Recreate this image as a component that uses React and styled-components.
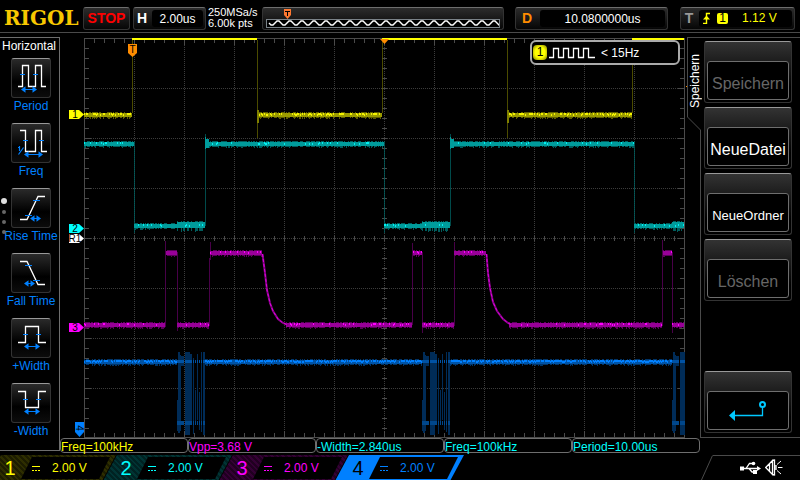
import React from 'react';
import styled, { createGlobalStyle } from 'styled-components';

const Colors = {
  ch1: '#ffff00',
  ch2: '#00ffff',
  ch3: '#ff00ff',
  ch4: '#0080ff',
  orange: '#ff8c00',
  line: '#4a4a4a',
  frame: '#6e6e6e',
  menu: '#00c8ff',
};

const measures = [
  { text: 'Freq=100kHz', color: Colors.ch1 },
  { text: 'Vpp=3.68 V', color: Colors.ch3 },
  { text: '-Width=2.840us', color: Colors.ch2 },
  { text: 'Freq=100kHz', color: Colors.ch2 },
  { text: 'Period=10.00us', color: Colors.ch2 },
];

const channels = [
  { id: 1, scale: '2.00 V', color: Colors.ch1, tint: '#2e2e00', shade: '#1c1c00' },
  { id: 2, scale: '2.00 V', color: Colors.ch2, tint: '#003434', shade: '#002222' },
  { id: 3, scale: '2.00 V', color: Colors.ch3, tint: '#340034', shade: '#200020' },
  { id: 4, scale: '2.00 V', color: Colors.ch4, active: true },
];

const tools = [
  {
    label: 'Period',
    wave: 'M7 28.5H11.5V7.5H17.5V28.5H24.5V7.5H30.5V28.5H35',
    ticks: 'M9 16.5H14M22 16.5H27',
    arrow: [11, 25, 31.5],
  },
  {
    label: 'Freq',
    wave: 'M9 7.5H14.5V28.5H24.5V7.5H30.5V28.5H36',
    ticks: 'M12 17.5H17M28 17.5H33M7.5 31.5L12.5 24.5M8.5 23V28M7 24.5H8',
    arrow: [14, 31, 31.5],
  },
  {
    label: 'Rise Time',
    wave: 'M9 31.5H16L27 8.5H34',
    ticks: 'M14 27.5H21M22 12.5H29',
    arrow: [20, 29, 30.5],
  },
  {
    label: 'Fall Time',
    wave: 'M9 8.5H16L27 31.5H34',
    ticks: 'M14 12.5H21M22 27.5H29',
    arrow: [14, 23, 30.5],
  },
  {
    label: '+Width',
    wave: 'M7 24.5H14.5V8.5H27.5V24.5H35',
    ticks: 'M12 16.5H17M25 16.5H30',
    arrow: [14, 28, 28.5],
  },
  {
    label: '-Width',
    wave: 'M7 8.5H14.5V24.5H27.5V8.5H35',
    ticks: 'M12 16.5H17M25 16.5H30',
    arrow: [14, 28, 28.5],
  },
];

// Small seeded generator, so the noise is the same on every render
const random = seed => {
  let s = seed;
  return () => {
    s = (s * 16807) % 2147483647;
    return s / 2147483647;
  };
};

const column = (x, y, h) => `M${x} ${y}h1v${h}h-1z`;

// Builds the bright, middle and faint layers of a noisy level.
// A segment is [from, to, top, extra noise]
const noise = (segments, seed, bright) => {
  const next = random(seed);
  const layers = { hot: '', mid: '', dim: '' };
  segments.forEach(([from, to, top, extra = 0]) => {
    for (let x = from; x < to; x++) {
      layers.mid += column(x, top + 1 - extra, 4 + extra);
      if (next() < bright) layers.hot += column(x, top + 1 + (next() < 0.3 ? 1 : 0), 2);
      if (next() < 0.6) layers.dim += column(x, top - extra, 6 + extra * 2);
      if (next() < 0.2) layers.dim += column(x, top + 5, 2 + extra);
    }
  });
  return layers;
};

const traces = [
  {
    name: 'ch1',
    hot: '#f4f400',
    mid: '#9c9c00',
    dim: '#5e5e00',
    segments: [[84, 132, 112], [258, 382, 112], [508, 632, 112]],
    bright: 0.5,
    edges: [
      [132, 40, 73], [257, 40, 98], [382, 40, 73], [507, 40, 98], [632, 40, 73],
    ],
  },
  {
    name: 'ch2',
    hot: '#00f0f0',
    mid: '#009c9c',
    dim: '#005c5c',
    segments: [
      [84, 134, 141], [134, 177, 223], [177, 205, 223, 2], [205, 384, 141],
      [384, 422, 223], [422, 450, 223, 2], [450, 634, 141], [634, 672, 223],
      [672, 684, 223, 2],
    ],
    bright: 0.16,
    edges: [
      [134, 141, 92], [205, 134, 92], [384, 141, 92], [450, 134, 92], [634, 141, 92],
    ],
  },
  {
    name: 'ch3',
    hot: '#ff00ff',
    mid: '#980098',
    dim: '#5a005a',
    segments: [
      [84, 165, 322], [166, 177, 250], [177, 209, 322], [210, 262, 250],
      [286, 412, 322], [413, 422, 250], [422, 454, 322], [454, 486, 250],
      [509, 662, 322], [663, 672, 250], [672, 684, 322],
    ],
    bright: 0.18,
    edges: [
      [165, 241, 86], [177, 252, 79], [209, 258, 68], [210, 242, 18], [412, 243, 82],
      [422, 252, 81], [454, 242, 84], [662, 240, 86], [672, 252, 81],
    ],
  },
  {
    name: 'ch4',
    hot: '#0080ff',
    mid: '#0052a4',
    dim: '#003468',
    segments: [[84, 177, 359], [205, 422, 359], [450, 672, 359]],
    bright: 0.8,
    edges: [],
  },
];

const decays = [
  'M262.5 254L265 273L267 290L270 303L273 311L278 319L283 323L288 325',
  'M486.5 254L488 273L490 288L493 302L497 311L503 319L508 323L512 325',
];

// [offset, top, width, height] of the serial data bursts
const burst = [
  [1, 352, 2, 81], [3, 355, 1, 76], [0, 400, 1, 31], [4, 356, 3, 10],
  [8, 352, 2, 83], [10, 352, 3, 83], [13, 354, 2, 68], [16, 358, 1, 76],
  [18, 390, 1, 32], [20, 354, 1, 66], [22, 392, 1, 38], [24, 352, 1, 80],
  [26, 352, 2, 83],
];

const range = (from, to, step) => {
  const list = [];
  for (let v = from; v <= to; v += step) list.push(v);
  return list;
};

const ToolIcon = ({ wave, ticks, arrow: [from, to, y] }) => (
  <svg width="38" height="38" viewBox="1 1 38 38" fill="none" aria-hidden="true">
    <path d={wave} stroke="#fff" strokeWidth="1.3" />
    <path d={`${ticks}M${from + 2} ${y}H${to - 2}`} stroke={Colors.ch4} strokeWidth="1.2" />
    <path
      d={`M${from - 1} ${y}l4.5 -3.3v6.6zM${to + 1} ${y}l-4.5 -3.3v6.6z`}
      fill={Colors.ch4}
    />
  </svg>
);

const Graticule = () => (
  <g shapeRendering="crispEdges" stroke="#3c3c3c" fill="none">
    {range(134, 634, 50).map(x => (
      <path key={x} d={`M${x}.5 39V437`} strokeDasharray="1 1" />
    ))}
    {range(88, 388, 50).map(y => (
      <path key={y} d={`M85 ${y}.5H684`} strokeDasharray="1 1" />
    ))}
    <path d="M84.5 38.5H684.5V437.5H84.5Z" stroke={Colors.line} />
    <path
      stroke={Colors.line}
      d={range(94, 674, 10)
        .map(x => {
          const l = (x - 84) % 50 ? 4 : 6;
          return `M${x}.5 39v${l}M${x}.5 437v-${l}M${x}.5 236v5`;
        })
        .join('')}
    />
    <path
      stroke={Colors.line}
      d={range(48, 428, 10)
        .map(y => {
          const l = (y - 38) % 50 ? 4 : 6;
          return `M85 ${y}.5h${l}M684 ${y}.5h-${l}M382 ${y}.5h5`;
        })
        .join('')}
    />
  </g>
);

const Trace = ({ trace, seed }) => {
  const layers = noise(trace.segments, seed, trace.bright);
  return (
    <g shapeRendering="crispEdges">
      <path d={layers.dim} fill={trace.dim} />
      <path
        d={trace.edges.map(([x, y, h]) => column(x, y, h)).join('')}
        fill={trace.dim}
        opacity="0.8"
      />
      <path d={layers.mid} fill={trace.mid} />
      <path d={layers.hot} fill={trace.hot} />
    </g>
  );
};

const Bursts = () => (
  <g shapeRendering="crispEdges">
    {[177, 422, 672].map(x =>
      burst
        .filter(([dx, , w]) => x + dx + w <= 685)
        .map(([dx, y, w, h]) => (
          <g key={x + dx}>
            <rect x={x + dx} y={y} width={w} height={h} fill="#002c58" />
            <rect x={x + dx} y={360} width={w} height={3} fill="#0052a4" />
            <rect x={x + dx} y={421} width={w} height={4} fill="#00478c" />
          </g>
        ))
    )}
  </g>
);

const Tag = ({ y, color, children }) => (
  <g>
    <path d={`M69 ${y}h10l5 4.5l-5 4.5h-10z`} fill={color} />
    <TagText x="75" y={y + 8}>
      {children}
    </TagText>
  </g>
);

const Plot = () => (
  <PlotSvg viewBox="60 37 627 401" role="img" aria-label="Waveforms">
    <Graticule />
    {traces.map((trace, i) => (
      <Trace key={trace.name} trace={trace} seed={977 + i * 131} />
    ))}
    <Bursts />
    {decays.map(d => (
      <g key={d} fill="none">
        <path d={d} stroke="#8a008a" strokeWidth="2" />
        <path d={d} stroke="#e000e0" strokeDasharray="3 2" />
      </g>
    ))}
    <path
      d="M132 38h125v2h-125zM382 38h125v2h-125zM632 38h52v2h-52z"
      fill={Colors.ch1}
    />
    <path
      d="M257 110h2v13h-2zM507 110h2v13h-2z"
      fill="#808000"
      shapeRendering="crispEdges"
    />
    <path
      d="M205 137h1v12h-1zM206 139h3v9h-3zM450 137h1v12h-1zM451 139h3v9h-3z"
      fill="#009c9c"
      shapeRendering="crispEdges"
    />
    <path d="M380 39h9l-4.500 5z" fill={Colors.orange} />
    <path d="M128 44h9v9l-4.500 4l-4.500 -4z" fill={Colors.orange} />
    <TagText x="132.5" y="53">
      T
    </TagText>
    <Tag y={110} color={Colors.ch1}>1</Tag>
    <Tag y={224} color={Colors.ch2}>2</Tag>
    <Tag y={234} color="#fff">R1</Tag>
    <Tag y={323} color={Colors.ch3}>3</Tag>
    <path d="M75 422h9v10l-4.500 5l-4.500 -5z" fill={Colors.ch4} />
    <TagText transform="translate(76 428) rotate(90)">4</TagText>
    <rect x="686" y="86" width="1" height="1" fill={Colors.orange} />
  </PlotSvg>
);

const Memory = () => {
  let d = 'M2 11';
  for (let x = 2; x < 233; x += 12) {
    d += 'l2 2h2l4 -4h2l2 2';
  }
  return (
    <svg width="100%" height="21" viewBox="0 0 240 21" aria-hidden="true">
      <rect x="3.500" y="11.500" width="233" height="8" fill="#000" stroke="#7a8288" />
      <svg x="4" y="4" width="232" height="16">
        <path d={d} fill="none" stroke="#fff" strokeWidth="1.400" />
      </svg>
      <path d="M21 1h7v6l-3.500 4l-3.500 -4z" fill="#ff7830" />
      <path d="M22 3.500h5M24.500 3v5" stroke="#000" />
    </svg>
  );
};

const App = () => (
  <Screen>
    <GlobalStyle />
    <TopBar>
      <Logo>RIGOL</Logo>
      <RunState>STOP</RunState>
      <Readout width={73}>
        <Symbol>H</Symbol>
        <Value>2.00us</Value>
      </Readout>
      <Sampling>
        250MSa/s
        <br />
        6.00k pts
      </Sampling>
      <MemoryBar>
        <Memory />
      </MemoryBar>
      <Readout width={153}>
        <Symbol color={Colors.orange} wide>D</Symbol>
        <Value>10.0800000us</Value>
      </Readout>
      <Readout width={115}>
        <Symbol color="#999">T</Symbol>
        <TriggerValue>
          <svg width="9" height="12" viewBox="0 0 9 12" fill="none" aria-hidden="true">
            <path d="M1 11.500H4.500V1.500H8" stroke={Colors.ch1} strokeWidth="1.400" />
            <path d="M1 7.500h7l-3.500 -4z" fill={Colors.ch1} />
          </svg>
          <Source>1</Source>
          <span>1.12 V</span>
        </TriggerValue>
      </Readout>
    </TopBar>

    <Main>
      <Sidebar>
        <SidebarTitle>Horizontal</SidebarTitle>
        {tools.map(tool => (
          <Tool key={tool.label} type="button">
            <Tile>
              <ToolIcon {...tool} />
            </Tile>
            {tool.label}
          </Tool>
        ))}
        <Pager>
          <Dot active />
          <Dot />
          <Dot />
          <Dot />
        </Pager>
      </Sidebar>

      <PlotArea>
        <Plot />
        <Counter>
          <CounterSource>1</CounterSource>
          <svg width="47" height="12" viewBox="0 0 47 12" aria-hidden="true">
            <path
              d="M0 10.500H4.500V1.500H9.500V10.500H14.500V1.500H19.500V10.500H24.500V1.500H29.500V10.500H34.500V1.500H39.500V10.500H46"
              fill="none"
              stroke="#fff"
              strokeWidth="1.300"
            />
          </svg>
          <span>&lt; 15Hz</span>
        </Counter>
      </PlotArea>

      <Menu>
        <Tab>
          <TabTitle>Speichern</TabTitle>
          <svg width="14" height="14" viewBox="0 0 14 14" aria-hidden="true">
            <path d="M0.500 0L13.500 13V14" fill="none" stroke={Colors.line} />
          </svg>
          <TabEdge />
        </Tab>
        <MenuItems>
          <MenuButton type="button" disabled>
            <MenuText>Speichern</MenuText>
          </MenuButton>
          <MenuButton type="button">
            <MenuText>NeueDatei</MenuText>
          </MenuButton>
          <MenuButton type="button">
            <MenuText small>NeueOrdner</MenuText>
          </MenuButton>
          <MenuButton type="button" disabled>
            <MenuText>Löschen</MenuText>
          </MenuButton>
          <BackButton type="button" aria-label="Back">
            <MenuText icon>
              <svg width="40" height="22" viewBox="0 0 40 22" fill="none" aria-hidden="true">
                <circle cx="34.500" cy="4.500" r="2.500" stroke={Colors.menu} strokeWidth="2" />
                <path d="M34.500 7V15.500H5" stroke={Colors.menu} strokeWidth="1.300" />
                <path d="M1 15.500l6 -5.500v11z" fill={Colors.menu} />
              </svg>
            </MenuText>
          </BackButton>
        </MenuItems>
      </Menu>

      <Measures>
        {measures.map(({ text, color }, i) => (
          <Measure key={i} color={color}>
            {text}
          </Measure>
        ))}
      </Measures>
    </Main>

    <BottomBar>
      {channels.map(channel => (
        <Channel key={channel.id} type="button" {...channel}>
          <ChannelNumber>{channel.id}</ChannelNumber>
          <ChannelInfo color={channel.color}>
            <svg width="8" height="5" viewBox="0 0 8 5" stroke="currentColor" aria-hidden="true">
              <path d="M0 0.500H8" />
              <path d="M0 4.500H8" strokeDasharray="2 1" />
            </svg>
            {channel.scale}
          </ChannelInfo>
        </Channel>
      ))}
      <Status>
        <svg width="12" height="26" viewBox="0 0 12 26" aria-hidden="true">
          <path d="M0 26L11.500 0.500" stroke={Colors.line} />
        </svg>
        <StatusIcons>
          <svg width="21" height="13" viewBox="0 0 21 13" fill="none" aria-label="USB">
            <path
              d="M3 7.500H18M6 7.500L9.500 2.500H13M9 7.500L12 11H15"
              stroke="#fff"
              strokeWidth="1.300"
            />
            <path d="M0 5.500h4v4h-4zM17 5l4 2.500l-4 2.500zM13 9h4v4h-4z" fill="#fff" />
            <circle cx="13.500" cy="2.500" r="1.800" fill="#fff" />
          </svg>
          <svg width="18" height="17" viewBox="0 0 18 17" fill="none" aria-label="Sound">
            <path
              d="M0.700 8.500L7.500 1.500V15.500ZM4.500 5V12M7.500 1.500L9.500 1V16L7.500 15.500M11 6V11"
              stroke="#fff"
              strokeWidth="1.300"
            />
            <path d="M12 5.500L16 2M13 8.500H17.500M12 11.500L16 15" stroke="#fff" />
          </svg>
        </StatusIcons>
      </Status>
    </BottomBar>
  </Screen>
);

const GlobalStyle = createGlobalStyle`
  * {
    box-sizing: border-box;
  }

  body {
    margin: 0;
    background: #000;
    color: #fff;
    font-family: 'Liberation Sans', Arial, sans-serif;
    font-size: 12px;
  }

  button {
    margin: 0;
    padding: 0;
    border: 0;
    background: none;
    color: inherit;
    font: inherit;
  }

  svg {
    display: block;
    flex: none;
  }
`;

const Screen = styled.div`
  display: flex;
  flex-direction: column;
  min-height: 100vh;
`;

const TopBar = styled.header`
  display: flex;
  align-items: center;
  height: 33px;
  padding: 4px 5px 0 0;
  border-bottom: 1px solid ${Colors.line};
`;

const Logo = styled.div`
  width: 83px;
  padding-left: 4px;
  color: #f8c800;
  font-family: 'DejaVu Serif', serif;
  font-size: 20px;
  font-weight: bold;
  line-height: 24px;
`;

const Box = styled.div`
  height: 23px;
  border: 1px solid #333;
  border-top-color: ${Colors.frame};
  border-radius: 3px;
  background: linear-gradient(#2c2c2c, #060606);
`;

const RunState = styled(Box)`
  width: 47px;
  margin-right: 3px;
  color: #f00;
  font-size: 14px;
  font-weight: bold;
  line-height: 20px;
  text-align: center;
`;

const Readout = styled(Box).withConfig({
  shouldForwardProp: prop => prop !== 'width',
})`
  display: flex;
  width: ${({ width }) => width}px;
`;

const Symbol = styled.span.withConfig({
  shouldForwardProp: prop => prop !== 'wide',
})`
  width: ${({ wide }) => (wide ? 22 : 16)}px;
  color: ${({ color }) => color || '#fff'};
  font-size: 14px;
  font-weight: bold;
  line-height: 21px;
  text-align: center;
`;

const Value = styled.span`
  flex: 1;
  margin: 2px;
  border-radius: 3px;
  background: #000;
  line-height: 19px;
  text-align: center;
`;

const TriggerValue = styled(Value)`
  display: flex;
  align-items: center;
  gap: 6px;
  padding-left: 3px;
  color: ${Colors.ch1};

  span:last-child {
    margin-left: 8px;
  }
`;

const Source = styled.span`
  width: 11px;
  border-radius: 2px;
  background: ${Colors.ch1};
  color: #000;
  line-height: 11px;
  text-align: center;
`;

const Sampling = styled.div`
  width: 56px;
  padding-left: 2px;
  font-size: 11px;
  line-height: 11px;
`;

const MemoryBar = styled(Box)`
  flex: 1;
  min-width: 0;
  margin-right: 11px;

  & + ${Readout} {
    margin-right: 12px;
  }
`;

const Main = styled.main`
  display: grid;
  flex: 1;
  grid-template-columns: 60px 1fr 113px;
  grid-template-rows: 1fr 16px;
  padding-top: 4px;
`;

const Sidebar = styled.nav`
  position: relative;
  grid-row: 1 / 3;
  margin-bottom: 3px;
  border: 1px solid ${Colors.frame};
  border-left: 0;
`;

const SidebarTitle = styled.div`
  padding-left: 2px;
  line-height: 16px;
  padding-bottom: 4px;
`;

const Tool = styled.button`
  display: flex;
  flex-direction: column;
  align-items: center;
  width: 100%;
  margin-bottom: 9px;
  padding-left: 3px;
  color: ${Colors.ch4};
  line-height: 16px;
  white-space: nowrap;

  &:last-of-type {
    margin-bottom: 0;
  }
`;

const Tile = styled.span`
  border: 1px solid #333;
  border-top-color: #999;
  border-radius: 3px;
  background: linear-gradient(#2a2a2a, #000 60%, #0c0c0c);
`;

const Pager = styled.div`
  position: absolute;
  top: 160px;
  left: 0;
  display: flex;
  flex-direction: column;
  align-items: center;
  width: 8px;
  gap: 6px;
`;

const Dot = styled.span.withConfig({
  shouldForwardProp: prop => prop !== 'active',
})`
  width: ${({ active }) => (active ? 6 : 4)}px;
  height: ${({ active }) => (active ? 6 : 4)}px;
  border-radius: 50%;
  background: ${({ active }) => (active ? '#ddd' : '#666')};
`;

const PlotArea = styled.section`
  position: relative;
`;

const PlotSvg = styled.svg`
  width: 100%;
`;

const TagText = styled.text`
  fill: #000;
  font-size: 10px;
  text-anchor: middle;
`;

const Counter = styled.div`
  position: absolute;
  top: 3px;
  right: 7px;
  display: flex;
  align-items: center;
  width: 150px;
  height: 25px;
  padding: 0 1px;
  border: 2px solid #aaa;
  border-radius: 6px;
  background: #000;

  span:last-child {
    margin-left: 5px;
  }
`;

const CounterSource = styled.span`
  width: 14px;
  margin-right: 2px;
  border-radius: 4px;
  background: radial-gradient(#ffff00 50%, #777700);
  color: #000;
  line-height: 15px;
  text-align: center;
`;

const Menu = styled.aside`
  display: flex;
  border-top: 1px solid ${Colors.line};
`;

const Tab = styled.div`
  display: flex;
  flex-direction: column;
  width: 14px;
`;

// Turned half a circle, so its right border is the left edge of the tab
const TabTitle = styled.div`
  height: 79px;
  padding-top: 9px;
  border-right: 1px solid ${Colors.line};
  line-height: 14px;
  transform: rotate(180deg);
  writing-mode: vertical-rl;
`;

const TabEdge = styled.div`
  flex: 1;
  border-right: 1px solid ${Colors.line};
`;

const MenuItems = styled.div`
  display: flex;
  flex: 1;
  flex-direction: column;
  gap: 4px;
  padding: 3px 8px 4px 3px;
  border-bottom: 1px solid ${Colors.line};
`;

const MenuButton = styled.button`
  display: flex;
  height: 62px;
  padding: 19px 2px 2px;
  border: 1px solid #333;
  border-top-color: #999;
  border-radius: 3px;
  background: linear-gradient(#333, #1c1c1c 20px, #000 45px);

  &:disabled {
    color: #666;
  }
`;

const BackButton = styled(MenuButton)`
  margin-top: auto;
`;

const MenuText = styled.span.withConfig({
  shouldForwardProp: prop => !['small', 'icon'].includes(prop),
})`
  display: flex;
  flex: 1;
  align-items: center;
  align-self: stretch;
  justify-content: center;
  padding-top: ${({ icon }) => (icon ? 0 : 6)}px;
  border: 1px solid ${Colors.frame};
  border-radius: 3px;
  background: #000;
  font-size: ${({ small }) => (small ? 13 : 16)}px;
`;

const Measures = styled.section`
  display: grid;
  grid-column: 2 / 4;
  grid-template-columns: repeat(5, 1fr);
  margin-right: 100px;
`;

const Measure = styled.div`
  height: 15px;
  border: 1px solid ${Colors.frame};
  border-radius: 4px;
  color: ${({ color }) => color};
  line-height: 16px;
  white-space: nowrap;
`;

const BottomBar = styled.footer`
  display: flex;
  height: 27px;
  padding-top: 1px;
`;

const Channel = styled.button.withConfig({
  shouldForwardProp: prop => !['scale', 'tint', 'shade', 'active', 'color'].includes(prop),
})`
  display: flex;
  width: 129px;
  height: 26px;
  margin-left: -13px;
  padding: 2px 6px 2px 0;
  color: ${({ color }) => color};
  clip-path: polygon(14px 0, 100% 0, calc(100% - 14px) 100%, 0 100%);
  background: ${({ color, tint, shade, active }) =>
    active
      ? color
      : `repeating-linear-gradient(45deg, ${shade} 0 2px, ${tint} 2px 4px)`};

  ${({ active }) => active && 'color: #000;'}
`;

const ChannelNumber = styled.span`
  width: 34px;
  padding-left: 12px;
  font-size: 20px;
  line-height: 23px;
`;

const ChannelInfo = styled.span`
  display: flex;
  flex: 1;
  align-items: center;
  gap: 12px;
  padding-left: 11px;
  background: #000;
  color: ${({ color }) => color};
  clip-path: polygon(11px 0, 100% 0, calc(100% - 11px) 100%, 0 100%);
`;

const Status = styled.div`
  display: flex;
  width: 99px;
  margin-left: auto;
`;

const StatusIcons = styled.div`
  display: flex;
  flex: 1;
  align-items: center;
  justify-content: flex-end;
  gap: 4px;
  padding-right: 17px;
  padding-bottom: 3px;
  border-top: 1px solid ${Colors.line};
`;

export default App;
